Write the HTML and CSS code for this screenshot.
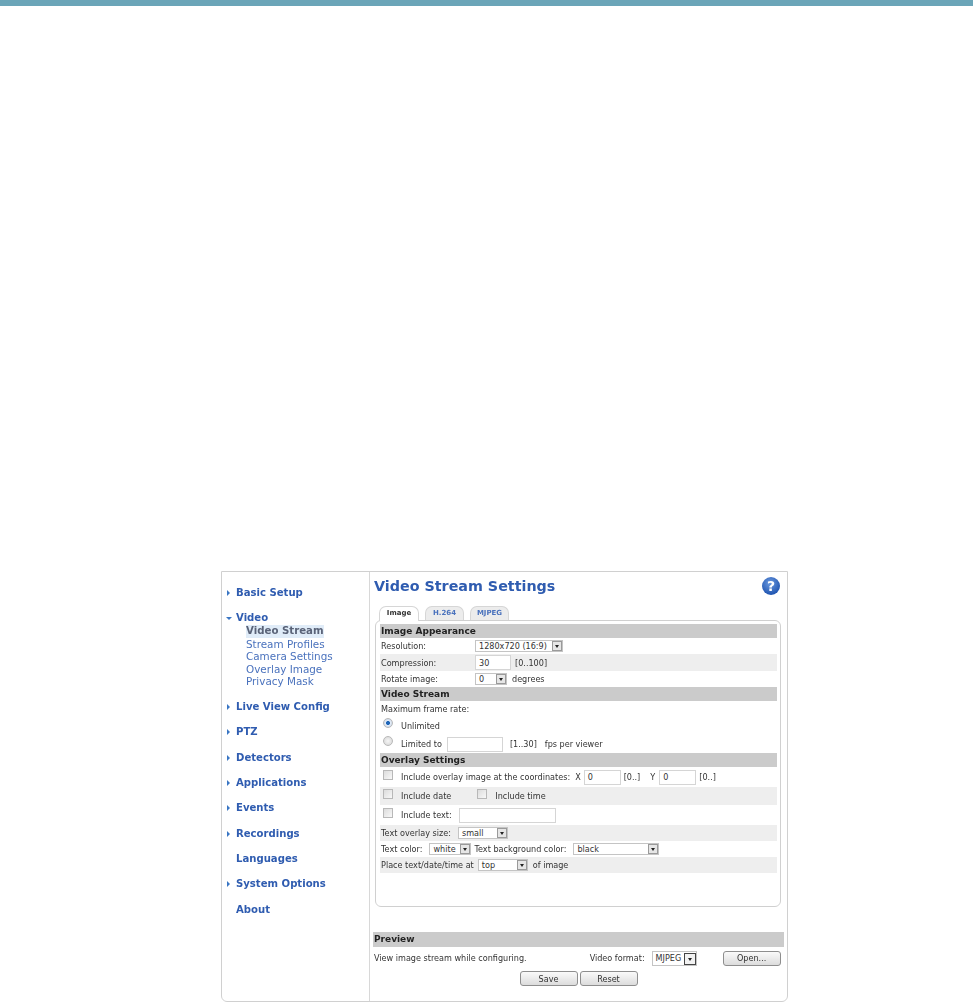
FILE: index.html
```html
<!DOCTYPE html>
<html lang="en">
<head>
<meta charset="utf-8">
<title>Video Stream Settings</title>
<link rel="stylesheet" href="styles.css">
</head>
<body>
<div class="topbar"></div>
<div class="panel">
  <nav class="side">
    <div class="nav-item closed">Basic Setup</div>
    <div class="nav-item open">Video</div>
    <div class="sub">
      <a class="current">Video Stream</a>
      <a>Stream Profiles</a>
      <a>Camera Settings</a>
      <a>Overlay Image</a>
      <a>Privacy Mask</a>
    </div>
    <div class="nav-item closed">Live View Config</div>
    <div class="nav-item closed">PTZ</div>
    <div class="nav-item closed">Detectors</div>
    <div class="nav-item closed">Applications</div>
    <div class="nav-item closed">Events</div>
    <div class="nav-item closed">Recordings</div>
    <div class="nav-item">Languages</div>
    <div class="nav-item closed">System Options</div>
    <div class="nav-item">About</div>
  </nav>
  <main class="main">
    <header class="head">
      <h1>Video Stream Settings</h1>
      <span class="help">?</span>
    </header>
    <div class="tabs">
      <span class="tab active">Image</span>
      <span class="tab">H.264</span>
      <span class="tab">MJPEG</span>
    </div>
    <div class="tabpanel">
      <h2 class="bar">Image Appearance</h2>
      <div class="row r16"><span class="lab">Resolution:</span><span class="sel w88">1280x720 (16:9)<i></i></span></div>
      <div class="row r17 alt"><span class="lab">Compression:</span><span class="inp w36">30</span><span class="ml4">[0..100]</span></div>
      <div class="row r16"><span class="lab">Rotate image:</span><span class="sel w32">0<i></i></span><span class="ml5">degrees</span></div>
      <h2 class="bar">Video Stream</h2>
      <div class="row r16">Maximum frame rate:</div>
      <div class="row r18 opt"><span class="radio on"></span>Unlimited</div>
      <div class="row r18 opt"><span class="radio"></span>Limited to<span class="inp w56 ml5"></span><span class="ml7">[1..30]</span><span class="ml8">fps per viewer</span></div>
      <h2 class="bar">Overlay Settings</h2>
      <div class="row r20 opt"><span class="check"></span>Include overlay image at the coordinates:<span class="ml5">X</span><span class="inp w37 ml3">0</span><span class="ml3">[0..]</span><span class="ml10">Y</span><span class="inp w37 ml4">0</span><span class="ml3">[0..]</span></div>
      <div class="row r18 opt alt"><span class="check"></span>Include date<span class="check cb2"></span>Include time</div>
      <div class="row r20 opt"><span class="check"></span>Include text:<span class="inp w97 ml7"></span></div>
      <div class="row r16 alt">Text overlay size:<span class="sel w50 ml7">small<i></i></span></div>
      <div class="row r16">Text color:<span class="sel w42 ml7">white<i></i></span><span class="ml3">Text background color:</span><span class="sel w86 ml7">black<i></i></span></div>
      <div class="row r16 alt">Place text/date/time at<span class="sel w50 ml4">top<i></i></span><span class="ml5">of image</span></div>
    </div>
    <h2 class="bar preview">Preview</h2>
    <div class="pv-row">
      <span>View image stream while configuring.</span>
      <span class="fmt">Video format:</span>
      <span class="sel w45 ml7 dark">MJPEG<i></i></span>
      <button class="btn open-btn" type="button">Open...</button>
    </div>
    <div class="actions">
      <button class="btn" type="button">Save</button>
      <button class="btn" type="button">Reset</button>
    </div>
  </main>
</div>
</body>
</html>
```
FILE: styles.css
```css
* { box-sizing: border-box; }
html, body { margin: 0; padding: 0; background: #fff; }
body { font-family: "DejaVu Sans", "Liberation Sans", sans-serif; color: #333; height: 1003px; overflow: hidden; }
.topbar { height: 6px; background: #6ba5b8; }
.panel {
  display: flex;
  width: 567px; height: 431px;
  margin: 565px 0 0 221px;
  border: 1px solid #d0d0d0;
  border-radius: 0 0 6px 6px;
  filter: blur(.3px);
}
.side { width: 148px; flex: none; padding: 15px 0 0 14px; border-right: 1px solid #d8d8d8; }
.nav-item {
  position: relative;
  font-size: 10.1px; font-weight: 700; color: #2f5cb0;
  height: 12.6px; line-height: 12.6px;
  margin-bottom: 12.8px;
}
.closed::before, .open::before { content: ""; position: absolute; }
.closed::before {
  left: -9px; top: 3px;
  border-left: 3px solid #3a76c4; border-top: 3px solid transparent; border-bottom: 3px solid transparent;
}
.open::before {
  left: -10px; top: 5px;
  border-top: 3px solid #3a76c4; border-left: 3px solid transparent; border-right: 3px solid transparent;
}
.open { margin-bottom: 0; }
.sub { margin: 0 0 12.8px 10px; }
.sub a { display: block; width: max-content; font-size: 10.4px; line-height: 12.6px; height: 12.6px; color: #4a72bd; }
.sub a.current { font-size: 10.2px; font-weight: 700; color: #5a6378; background: #e0ecf8; }

.main { flex: 1; min-width: 0; padding: 0 3px; font-size: 8.1px; }
.head { display: flex; justify-content: space-between; align-items: center; height: 34px; padding: 0 4px 6px 1px; }
h1 { margin: 0; font-size: 14.3px; font-weight: 700; color: #2f5cb0; line-height: 28px; }
.help {
  width: 18px; height: 18px; border-radius: 50%;
  background: radial-gradient(circle at 45% 35%, #6d9be0, #1f54b0 75%);
  color: #fff; font: 700 14px/18px "DejaVu Sans", sans-serif; text-align: center;
}
.tabs { display: flex; height: 14px; margin-left: 6px; gap: 6px; position: relative; z-index: 1; }
.tab {
  width: 39px; height: 14px; text-align: center; line-height: 13px;
  background: #ececec; border: 1px solid #d6d6d6; border-bottom: 0;
  border-radius: 7px 7px 0 0; color: #4a72bd; font-weight: 700; font-size: 7px;
}
.tab.active { width: 40px; background: #fff; color: #333; height: 15px; }
.tabpanel {
  width: 406px; height: 287px; margin-left: 2px;
  padding: 3px 3px 0 4px;
  border: 1px solid #d0d0d0; border-radius: 6px;
}
.bar { margin: 0; height: 14px; line-height: 14px; padding-left: 1px; background: #cbcbcb; color: #222; font-size: 9px; font-weight: 700; }
.row { display: flex; align-items: center; padding-left: 1px; white-space: nowrap; }
.r16 { height: 16px; } .r17 { height: 17px; } .r18 { height: 18px; } .r20 { height: 20px; }
.alt { background: #eeeeee; }
.opt { padding-left: 3px; }
.lab { width: 94px; flex: none; }
.inp, .sel { display: inline-flex; align-items: center; flex: none; background: #fff; border: 1px solid #d5d5d5; font-size: 8.1px; padding-left: 3px; position: relative; }
.inp { height: 15px; }
.sel { height: 12px; border-color: #c4c4c4; }
.sel i {
  position: absolute; right: 0; top: 0; width: 10px; height: 10px;
  background: #e6e6e6; border: 1px solid #9a9a9a;
}
.sel i::after {
  content: ""; position: absolute; left: 2px; top: 3px;
  border-top: 3px solid #222; border-left: 2px solid transparent; border-right: 2px solid transparent;
}
.sel.dark { height: 15px; }
.sel.dark i { top: 1px; width: 12px; height: 12px; background: #f2f2f2; border-color: #444; }
.sel.dark i::after { left: 3px; top: 4px; }
.w32 { width: 32px; } .w36 { width: 36px; } .w37 { width: 37px; } .w42 { width: 42px; } .w45 { width: 45px; }
.w50 { width: 50px; } .w56 { width: 56px; } .w86 { width: 86px; } .w88 { width: 88px; } .w97 { width: 97px; }
.ml3 { margin-left: 3px; } .ml4 { margin-left: 4px; } .ml5 { margin-left: 5px; } .ml7 { margin-left: 7px; } .ml8 { margin-left: 8px; } .ml10 { margin-left: 10px; }
.radio, .check { flex: none; width: 10px; height: 10px; margin-right: 8px; margin-top: -5px; background: #f0f0f0; border: 1px solid #b8b8b8; }
.radio { border-radius: 50%; background: radial-gradient(circle, #f6f6f6, #d4d4d4); margin-top: -6px; }
.radio.on { background: radial-gradient(circle, #1f66b8 32%, #e6eef8 40%, #b8c8dc); }
.check { background: linear-gradient(135deg, #dcdcdc, #f8f8f8); }
.cb2 { margin-left: 26px; }
.preview { margin-top: 25px; height: 15px; line-height: 15px; width: 411px; }
.pv-row { display: flex; align-items: center; height: 22px; width: 411px; padding-left: 1px; white-space: nowrap; }
.fmt { margin-left: 63px; }
.open-btn { margin-left: 26px; }
.btn {
  width: 58px; height: 15px; padding: 0; font: 8.1px "DejaVu Sans", sans-serif; color: #333;
  background: linear-gradient(#fafafa, #dcdcdc); border: 1px solid #8e8e8e; border-radius: 3px;
}
.actions { display: flex; justify-content: center; gap: 2px; margin-top: 2px; }
```
